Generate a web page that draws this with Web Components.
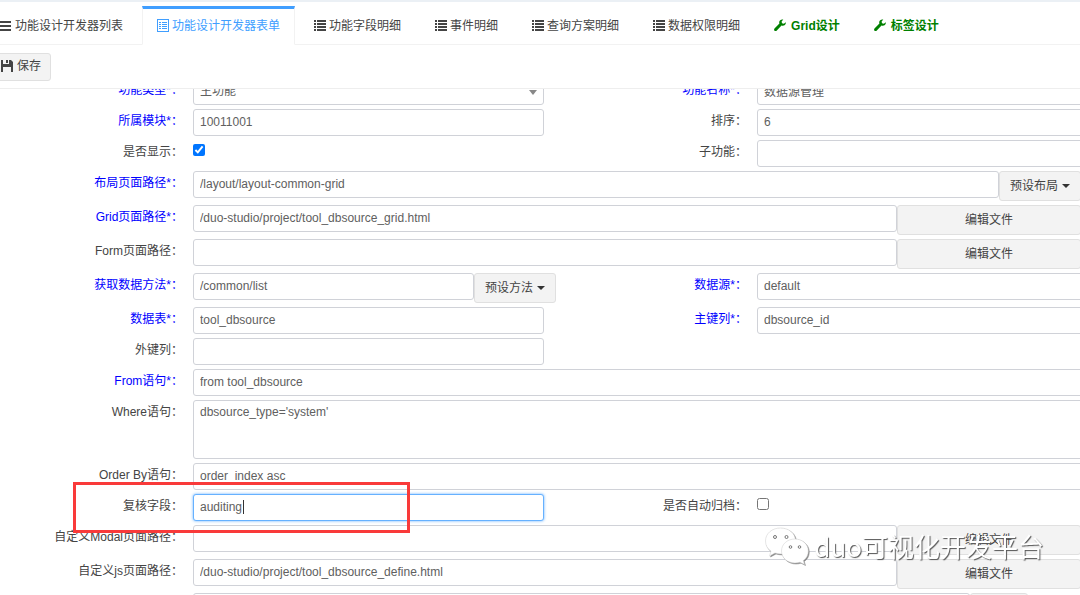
<!DOCTYPE html>
<html lang="zh-CN">
<head>
<meta charset="utf-8">
<title>功能设计开发器</title>
<style>
  html, body { height: 100%; }
  body {
    margin: 0;
    overflow: hidden;
    background: #fff;
    color: #444;
    font: 12px/24px "Liberation Sans", "Noto Sans CJK SC", sans-serif;
  }
</style>
</head>
<body>
<design-page>
  <nav-tab slot="tabs" icon="bars">功能设计开发器列表</nav-tab>
  <nav-tab slot="tabs" icon="form" active>功能设计开发器表单</nav-tab>
  <nav-tab slot="tabs" icon="list">功能字段明细</nav-tab>
  <nav-tab slot="tabs" icon="list">事件明细</nav-tab>
  <nav-tab slot="tabs" icon="list">查询方案明细</nav-tab>
  <nav-tab slot="tabs" icon="list">数据权限明细</nav-tab>
  <nav-tab slot="tabs" icon="wrench" design>Grid设计</nav-tab>
  <nav-tab slot="tabs" icon="wrench" design>标签设计</nav-tab>

  <tool-button slot="tools" icon="save" compact>保存</tool-button>

  <form-row>
    <form-field label="功能类型" required type="select" value="主功能"></form-field>
    <form-field label="功能名称" required value="数据源管理"></form-field>
  </form-row>
  <form-row>
    <form-field label="所属模块" required value="10011001"></form-field>
    <form-field label="排序" value="6"></form-field>
  </form-row>
  <form-row>
    <form-field label="是否显示" type="checkbox" checked></form-field>
    <form-field label="子功能"></form-field>
  </form-row>
  <form-row>
    <form-field wide label="布局页面路径" required value="/layout/layout-common-grid"><tool-button menu>预设布局</tool-button></form-field>
  </form-row>
  <form-row>
    <form-field wide label="Grid页面路径" required value="/duo-studio/project/tool_dbsource_grid.html"><tool-button wide>编辑文件</tool-button></form-field>
  </form-row>
  <form-row>
    <form-field wide label="Form页面路径"><tool-button wide>编辑文件</tool-button></form-field>
  </form-row>
  <form-row>
    <form-field label="获取数据方法" required value="/common/list"><tool-button menu>预设方法</tool-button></form-field>
    <form-field label="数据源" required value="default"></form-field>
  </form-row>
  <form-row>
    <form-field label="数据表" required value="tool_dbsource"></form-field>
    <form-field label="主键列" required value="dbsource_id"></form-field>
  </form-row>
  <form-row>
    <form-field label="外键列"></form-field>
  </form-row>
  <form-row>
    <form-field wide label="From语句" required value="from tool_dbsource"></form-field>
  </form-row>
  <form-row>
    <form-field wide label="Where语句" type="textarea" value="dbsource_type='system'"></form-field>
  </form-row>
  <form-row>
    <form-field wide label="Order By语句" value="order  index asc"></form-field>
  </form-row>
  <form-row marked>
    <form-field label="复核字段" value="auditing" editing></form-field>
    <form-field label="是否自动归档" type="checkbox"></form-field>
  </form-row>
  <form-row>
    <form-field wide label="自定义Modal页面路径"><tool-button wide>编辑文件</tool-button></form-field>
  </form-row>
  <form-row>
    <form-field wide label="自定义js页面路径" value="/duo-studio/project/tool_dbsource_define.html"><tool-button wide>编辑文件</tool-button></form-field>
  </form-row>
  <form-row>
    <form-field wide trailing label=""><tool-button short></tool-button></form-field>
  </form-row>

  <brand-mark slot="mark">duo可视化开发平台</brand-mark>
</design-page>

<script>
const ICONS = {
  bars: '<path d="M0 2h11v2H0zM0 6h11v2H0zM0 10h11v2H0z"/>',
  form: '<path fill-rule="evenodd" d="M0 0h12v13H0zM1 1v11h10V1z"/><path d="M2 3h2v1H2zM5 3h5v1H5zM2 5h2v1H2zM5 5h5v1H5zM2 7h2v1H2zM5 7h5v1H5zM2 9h2v1H2zM5 9h5v1H5z"/>',
  list: '<path d="M0 1h2v2H0zM3 1h9v2H3zM0 4h2v2H0zM3 4h9v2H3zM0 7h2v2H0zM3 7h9v2H3zM0 10h2v2H0zM3 10h9v2H3z"/>',
  wrench: '<path d="M11.8 3.2 9.9 4.8 8 4.3 7.6 2.5 9.3.6C7.500-.1 5.500 1 5.200 2.900c-.1.6 0 1.100.2 1.600L.5 9.600c-1.300 1.500.7 3.300 2.100 2.100l4.900-5.100c2.400.9 4.700-.9 4.300-3.400z"/>',
  save: '<path fill-rule="evenodd" d="M0 0h2v4h6V0h2l2 2v10h-2V7H2v5H0zM5 0h2v3H5z"/>'
};
const icon = name => name ? `<svg width="12" height="13" viewBox="0 0 12 13" fill="currentColor" aria-hidden="true">${ICONS[name]}</svg>` : '';

function define(name, render) {
  customElements.define(name, class extends HTMLElement {
    connectedCallback() {
      if (this.shadowRoot) return;
      this.attachShadow({ mode: 'open' }).innerHTML = render(this);
    }
  });
}

define('design-page', () => `
  <style>
    :host { display: flex; flex-direction: column; height: 100vh; overflow: hidden; border-top: 2px solid #ebf0f5; box-sizing: border-box; }
    nav { display: flex; gap: 4px; padding-top: 4px; flex: none; box-shadow: inset 0 -1px #f2f2f2; }
    nav ::slotted(:first-child) { margin-left: -15px; }
    header { flex: none; display: flex; padding: 8px 0 7px; border-bottom: 1px solid #eee; }
    header ::slotted(*) { margin-left: -8px; }
    main { flex: 1; min-height: 0; overflow: hidden; }
    form { display: flex; flex-direction: column; gap: 4px; margin-top: -11px; width: calc(100% + 48px); }
  </style>
  <nav><slot name="tabs"></slot></nav>
  <header><slot name="tools"></slot></header>
  <main><form><slot></slot></form></main>
  <slot name="mark"></slot>`);

define('nav-tab', el => `
  <style>
    :host { display: block; flex: none; }
    a { display: flex; align-items: center; gap: 3px; height: 33px; padding: 0 14px 2px; border: 1px solid transparent; border-width: 3px 1px 1px; color: #444; text-decoration: none; white-space: nowrap; }
    svg { flex: none; }
    :host([active]) a { color: #409eff; background: #fff; border-color: #409eff #f2f2f2 #fff; }
    :host([design]) a { color: #008000; font-weight: bold; gap: 5px; }
  </style>
  <a href="#" ${el.hasAttribute('active') ? 'aria-current="page"' : ''}>${icon(el.getAttribute('icon'))}<span><slot></slot></span></a>`);

define('tool-button', el => `
  <style>
    :host { display: block; flex: none; }
    button { display: flex; align-items: center; justify-content: center; gap: 4px; box-sizing: border-box; width: 100%; height: 30px; margin: 0; padding: 0 8px; border: 1px solid #e0e0e0; border-radius: 3px; background: #f3f3f3; color: #444; font: inherit; white-space: nowrap; }
    :host([compact]) button { height: 28px; padding: 0 9px 2px 8px; }
    :host([menu]) { width: 82px; }
    :host([wide]) { width: 184px; }
    :host([short]) { width: 58px; }
    i { border: 4px solid transparent; border-top-color: #333; border-bottom: 0; }
  </style>
  <button type="button">${icon(el.getAttribute('icon'))}<span><slot></slot></span>${el.hasAttribute('menu') ? '<i></i>' : ''}</button>`);

define('form-row', () => `
  <style>
    :host { display: grid; grid-template-columns: 1fr 1fr; position: relative; }
    .frame { display: none; }
    :host([marked]) .frame { display: block; position: absolute; z-index: 2; left: 73px; top: -12px; width: 337px; height: 51px; box-sizing: border-box; border: 3px solid #f93a3a; pointer-events: none; }
  </style>
  <slot></slot><div class="frame"></div>`);

define('form-field', el => {
  const type = el.getAttribute('type') || 'text';
  const value = el.getAttribute('value') || '';
  const label = el.getAttribute('label');
  const name = label ? '' : 'aria-label="路径"';
  const control = {
    text: `<input id="c" type="text" value="${value}" autocomplete="off" ${name}>`,
    checkbox: `<input id="c" type="checkbox" ${el.hasAttribute('checked') ? 'checked' : ''}>`,
    textarea: `<textarea id="c">${value}</textarea>`,
    select: `<select id="c"><option>${value}</option></select><i></i>`
  }[type];
  return `
  <style>
    :host { display: grid; grid-template-columns: 188px minmax(0, 1fr); align-items: start; min-width: 0; }
    :host([wide]) { grid-column: 1 / -1; }
    label { padding-right: 5px; text-align: right; white-space: nowrap; color: #444; }
    :host([required]) label { color: #00f; }
    .control { display: flex; align-items: flex-start; position: relative; min-height: 27px; padding: 0 20px 0 5px; }
    .control.attached { padding-right: 8px; }
    :host([wide]) .control.attached { padding-right: 47px; }
    :host([trailing]) .control.attached { padding-right: 100px; }
    input[type=text], select, textarea {
      flex: 1; min-width: 0; box-sizing: border-box; height: 27px; margin: 0; padding: 0 6px 2px;
      border: 1px solid #d0d2d8; border-radius: 3px; background: #fff; color: #606060; font: inherit; outline: 0;
    }
    textarea { height: 59px; line-height: 22px; resize: none; overflow: hidden; }
    select { appearance: none; }
    input[type=checkbox] { width: 12px; height: 12px; margin: 4px 0 0; }
    i { position: absolute; right: 27px; top: 12px; border: 4px solid transparent; border-top: 5px solid #888; border-bottom: 0; pointer-events: none; }
    :host([editing]) input { border-color: #66b1ff; box-shadow: 0 0 3px #66b1ff; background: linear-gradient(#333, #333) 49px 5px / 1px 14px no-repeat #fff; }
  </style>
  <label for="c">${label ? label + (el.hasAttribute('required') ? '*' : '') + '：' : ''}</label>
  <div class="control ${el.childElementCount ? 'attached' : ''}">${control}<slot></slot></div>`;
});

define('brand-mark', () => `
  <style>
    :host { position: fixed; right: 36px; bottom: 29px; z-index: 3; display: flex; align-items: center; gap: 5px; color: #fff; font: 26px/40px "Noto Sans CJK SC", sans-serif; white-space: nowrap; pointer-events: none; }
    span { text-shadow: 1px 1px 1px #555; }
    svg { flex: none; filter: drop-shadow(1px 1px 0 #888); }
  </style>
  <svg width="44" height="38" viewBox="0 0 44 38" fill="#fff" stroke="#ccc" stroke-width="0.5" aria-hidden="true">
    <path d="M15.500 1C7 1 .5 6.500.5 14c0 4.500 2 8 5.500 10.200L4.500 29l5.500-3c2 .6 4 .9 6 .9 8 0 14.500-5.500 14.500-13S24 1 15.500 1z"/>
    <path d="M30 12c-7.500 0-13.500 5-13.500 12S22.500 36 30 36c1.800 0 3.500-.3 5-.8l4.500 2.300-1.200-4c3.200-2.200 5-5.500 5-9.500 0-7-6-12-13.300-12z"/>
    <g fill="#fff" stroke="#777" stroke-width="1"><circle cx="10" cy="10" r="1.500"/><circle cx="21.500" cy="10" r="1.500"/><circle cx="25.500" cy="20" r="1.300"/><circle cx="34.500" cy="20" r="1.300"/></g>
  </svg>
  <span><slot></slot></span>`);
</script>
</body>
</html>
